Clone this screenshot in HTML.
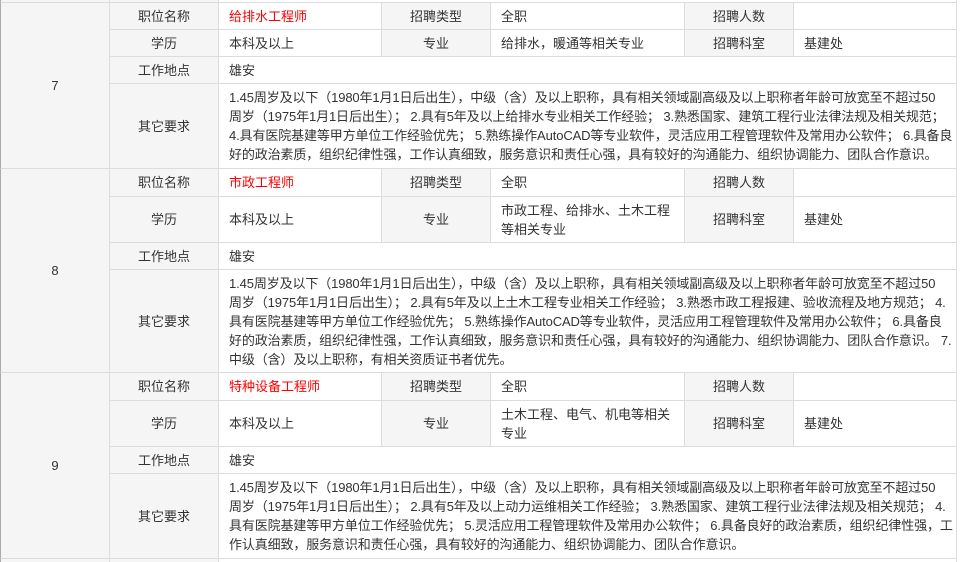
<!DOCTYPE html>
<html><head><meta charset="utf-8"><style>
*{margin:0;padding:0;box-sizing:border-box}
html{overflow:hidden}
body{width:960px;height:562px;overflow:hidden;background:#fff;position:relative;font-family:"Liberation Sans","Noto Sans CJK SC",sans-serif;font-size:13px;color:#333}
.c{position:absolute;border-right:1px solid #dcdcdc;border-bottom:1px solid #dcdcdc;display:flex;align-items:center;line-height:19px;white-space:nowrap}
.g{background:#f5f5f5;justify-content:center}
.v{background:#fff;padding-left:10px}
.t{letter-spacing:-0.12px}
.r{color:#f00}
.n{background:#f5f5f5;justify-content:center;border-left:1px solid #aaa}
</style></head><body>
<div class="c n" style="left:0;top:-10px;width:110px;height:13px"></div>
<div class="c g" style="left:110px;top:-10px;width:109px;height:13px"></div>
<div class="c v" style="left:219px;top:-10px;width:738px;height:13px"></div>

<div class="c n" style="left:0;top:3px;width:110px;height:166px">7</div>
<div class="c g" style="left:110px;top:3px;width:109px;height:27px">职位名称</div>
<div class="c v r" style="left:219px;top:3px;width:163px;height:27px">给排水工程师</div>
<div class="c g" style="left:382px;top:3px;width:109px;height:27px">招聘类型</div>
<div class="c v" style="left:491px;top:3px;width:194px;height:27px">全职</div>
<div class="c g" style="left:685px;top:3px;width:109px;height:27px">招聘人数</div>
<div class="c v" style="left:794px;top:3px;width:163px;height:27px"></div>
<div class="c g" style="left:110px;top:30px;width:109px;height:27px">学历</div>
<div class="c v" style="left:219px;top:30px;width:163px;height:27px">本科及以上</div>
<div class="c g" style="left:382px;top:30px;width:109px;height:27px">专业</div>
<div class="c v" style="left:491px;top:30px;width:194px;height:27px">给排水，暖通等相关专业</div>
<div class="c g" style="left:685px;top:30px;width:109px;height:27px">招聘科室</div>
<div class="c v" style="left:794px;top:30px;width:163px;height:27px">基建处</div>
<div class="c g" style="left:110px;top:57px;width:109px;height:27px">工作地点</div>
<div class="c v" style="left:219px;top:57px;width:738px;height:27px">雄安</div>
<div class="c g" style="left:110px;top:84px;width:109px;height:85px">其它要求</div>
<div class="c v t" style="left:219px;top:84px;width:738px;height:85px"><div>1.45周岁及以下（1980年1月1日后出生），中级（含）及以上职称，具有相关领域副高级及以上职称者年龄可放宽至不超过50<br>周岁（1975年1月1日后出生）； 2.具有5年及以上给排水专业相关工作经验； 3.熟悉国家、建筑工程行业法律法规及相关规范；<br>4.具有医院基建等甲方单位工作经验优先； 5.熟练操作AutoCAD等专业软件，灵活应用工程管理软件及常用办公软件； 6.具备良<br>好的政治素质，组织纪律性强，工作认真细致，服务意识和责任心强，具有较好的沟通能力、组织协调能力、团队合作意识。</div></div>

<div class="c n" style="left:0;top:169px;width:110px;height:204px">8</div>
<div class="c g" style="left:110px;top:169px;width:109px;height:28px">职位名称</div>
<div class="c v r" style="left:219px;top:169px;width:163px;height:28px">市政工程师</div>
<div class="c g" style="left:382px;top:169px;width:109px;height:28px">招聘类型</div>
<div class="c v" style="left:491px;top:169px;width:194px;height:28px">全职</div>
<div class="c g" style="left:685px;top:169px;width:109px;height:28px">招聘人数</div>
<div class="c v" style="left:794px;top:169px;width:163px;height:28px"></div>
<div class="c g" style="left:110px;top:197px;width:109px;height:46px">学历</div>
<div class="c v" style="left:219px;top:197px;width:163px;height:46px">本科及以上</div>
<div class="c g" style="left:382px;top:197px;width:109px;height:46px">专业</div>
<div class="c v" style="left:491px;top:197px;width:194px;height:46px"><div>市政工程、给排水、土木工程<br>等相关专业</div></div>
<div class="c g" style="left:685px;top:197px;width:109px;height:46px">招聘科室</div>
<div class="c v" style="left:794px;top:197px;width:163px;height:46px">基建处</div>
<div class="c g" style="left:110px;top:243px;width:109px;height:27px">工作地点</div>
<div class="c v" style="left:219px;top:243px;width:738px;height:27px">雄安</div>
<div class="c g" style="left:110px;top:270px;width:109px;height:103px">其它要求</div>
<div class="c v t" style="left:219px;top:270px;width:738px;height:103px"><div>1.45周岁及以下（1980年1月1日后出生），中级（含）及以上职称，具有相关领域副高级及以上职称者年龄可放宽至不超过50<br>周岁（1975年1月1日后出生）； 2.具有5年及以上土木工程专业相关工作经验； 3.熟悉市政工程报建、验收流程及地方规范； 4.<br>具有医院基建等甲方单位工作经验优先； 5.熟练操作AutoCAD等专业软件，灵活应用工程管理软件及常用办公软件； 6.具备良<br>好的政治素质，组织纪律性强，工作认真细致，服务意识和责任心强，具有较好的沟通能力、组织协调能力、团队合作意识。 7.<br>中级（含）及以上职称，有相关资质证书者优先。</div></div>

<div class="c n" style="left:0;top:373px;width:110px;height:186px">9</div>
<div class="c g" style="left:110px;top:373px;width:109px;height:28px">职位名称</div>
<div class="c v r" style="left:219px;top:373px;width:163px;height:28px">特种设备工程师</div>
<div class="c g" style="left:382px;top:373px;width:109px;height:28px">招聘类型</div>
<div class="c v" style="left:491px;top:373px;width:194px;height:28px">全职</div>
<div class="c g" style="left:685px;top:373px;width:109px;height:28px">招聘人数</div>
<div class="c v" style="left:794px;top:373px;width:163px;height:28px"></div>
<div class="c g" style="left:110px;top:401px;width:109px;height:46px">学历</div>
<div class="c v" style="left:219px;top:401px;width:163px;height:46px">本科及以上</div>
<div class="c g" style="left:382px;top:401px;width:109px;height:46px">专业</div>
<div class="c v" style="left:491px;top:401px;width:194px;height:46px"><div>土木工程、电气、机电等相关<br>专业</div></div>
<div class="c g" style="left:685px;top:401px;width:109px;height:46px">招聘科室</div>
<div class="c v" style="left:794px;top:401px;width:163px;height:46px">基建处</div>
<div class="c g" style="left:110px;top:447px;width:109px;height:27px">工作地点</div>
<div class="c v" style="left:219px;top:447px;width:738px;height:27px">雄安</div>
<div class="c g" style="left:110px;top:474px;width:109px;height:85px">其它要求</div>
<div class="c v t" style="left:219px;top:474px;width:738px;height:85px"><div>1.45周岁及以下（1980年1月1日后出生），中级（含）及以上职称，具有相关领域副高级及以上职称者年龄可放宽至不超过50<br>周岁（1975年1月1日后出生）； 2.具有5年及以上动力运维相关工作经验； 3.熟悉国家、建筑工程行业法律法规及相关规范； 4.<br>具有医院基建等甲方单位工作经验优先； 5.灵活应用工程管理软件及常用办公软件； 6.具备良好的政治素质，组织纪律性强，工<br>作认真细致，服务意识和责任心强，具有较好的沟通能力、组织协调能力、团队合作意识。</div></div>

<div class="c n" style="left:0;top:559px;width:110px;height:3px;border-bottom:none"></div>
<div class="c g" style="left:110px;top:559px;width:109px;height:3px;border-bottom:none"></div>
<div class="c v" style="left:219px;top:559px;width:738px;height:3px;border-bottom:none"></div>
</body></html>
